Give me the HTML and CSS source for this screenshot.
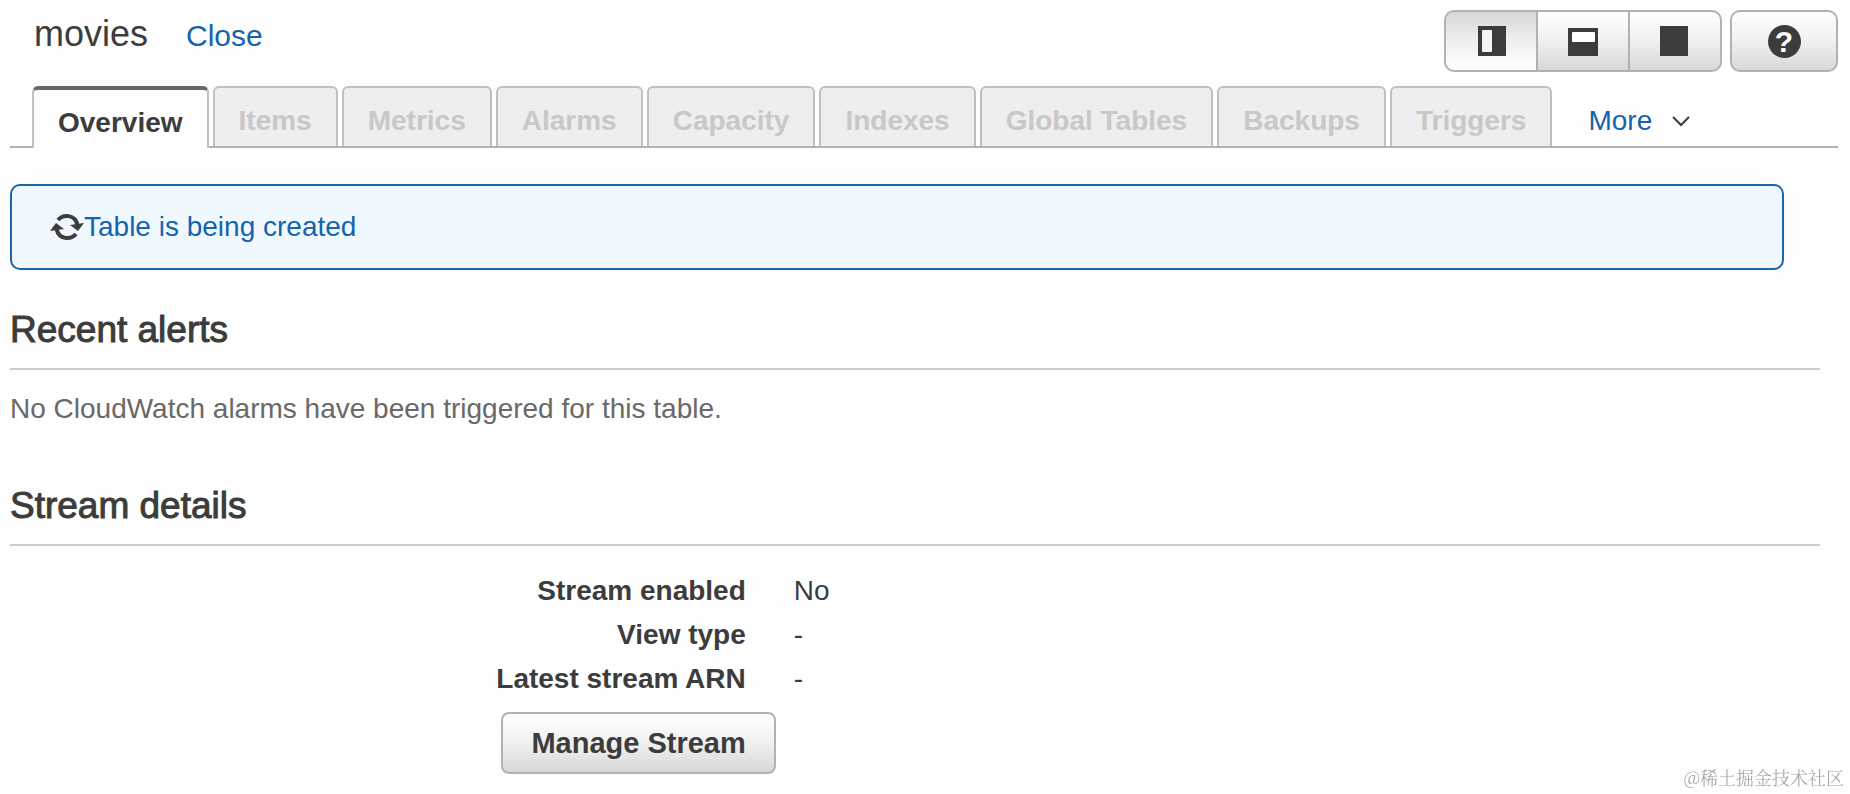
FILE: index.html
```html
<!DOCTYPE html>
<html lang="en">
<head>
    <meta charset="UTF-8">
    <meta name="viewport" content="width=device-width, initial-scale=1.0">
    <title>movies</title>
    <link rel="stylesheet" href="styles.css">
</head>
<body>
    <header class="header">
        <div class="title">
            <h1>movies</h1>
            <a href="#">Close</a>
        </div>
        <div class="tools">
            <div class="btn-group">
                <button class="btn active" type="button" aria-label="Side layout">
                    <svg width="30" height="30" viewBox="0 0 30 30">
                        <rect x="2" width="28" height="30" fill="#3c3c3c"/>
                        <rect x="6" y="4" width="10" height="22" rx="1" fill="#f4f4f4"/>
                    </svg>
                </button>
                <button class="btn" type="button" aria-label="Bottom layout">
                    <svg width="30" height="30" viewBox="0 0 30 30">
                        <rect y="2" width="30" height="28" fill="#3c3c3c"/>
                        <rect x="4" y="6" width="23" height="10" rx="1" fill="#fff"/>
                    </svg>
                </button>
                <button class="btn" type="button" aria-label="Full layout">
                    <svg width="30" height="30" viewBox="0 0 30 30">
                        <rect width="28" height="30" fill="#3c3c3c"/>
                    </svg>
                </button>
            </div>
            <button class="btn help" type="button" aria-label="Help"><span>?</span></button>
        </div>
    </header>

    <nav class="tabs">
        <button class="tab selected" type="button">Overview</button>
        <button class="tab" type="button" disabled>Items</button>
        <button class="tab" type="button" disabled>Metrics</button>
        <button class="tab" type="button" disabled>Alarms</button>
        <button class="tab" type="button" disabled>Capacity</button>
        <button class="tab" type="button" disabled>Indexes</button>
        <button class="tab" type="button" disabled>Global Tables</button>
        <button class="tab" type="button" disabled>Backups</button>
        <button class="tab" type="button" disabled>Triggers</button>
        <a class="more" href="#">More
            <svg width="18" height="12" viewBox="0 0 18 12">
                <path d="M1 2l8 8 8-8" fill="none" stroke="#3c3c3c" stroke-width="2"/>
            </svg>
        </a>
    </nav>

    <main class="content">
        <div class="notice">
            <svg width="34" height="28" viewBox="0 0 34 28">
                <g fill="none" stroke="#3c3c3c" stroke-width="4">
                    <path d="M8 7C13 1 25 1 27.500 12"/>
                    <path d="M26 21C21 27 9 27 6.500 16"/>
                </g>
                <path d="M20 12l14-2-6 8z" fill="#3c3c3c"/>
                <path d="M14 16L0 18l6-8z" fill="#3c3c3c"/>
            </svg>
            <span>Table is being created</span>
        </div>

        <section>
            <h2>Recent alerts</h2>
            <p>No CloudWatch alarms have been triggered for this table.</p>
        </section>

        <section class="stream">
            <h2>Stream details</h2>
            <dl class="details">
                <dt>Stream enabled</dt>
                <dd>No</dd>
                <dt>View type</dt>
                <dd>-</dd>
                <dt>Latest stream ARN</dt>
                <dd>-</dd>
            </dl>
            <div class="actions">
                <button class="btn manage" type="button">Manage Stream</button>
            </div>
        </section>
    </main>

    <div class="watermark">@稀土掘金技术社区</div>
</body>
</html>
```

FILE: styles.css
```css
*{
    box-sizing: border-box;
    margin: 0;
    padding: 0;
}
body{
    padding: 10px 12px 20px 10px;
    background-color: #fefefe;
    color: #3c3c3c;
    font-family: "Liberation Sans", Arial, sans-serif;
    font-size: 28px;
    line-height: 44px;
}
a{
    color: #1663ab;
    text-decoration: none;
}
button{
    font-family: inherit;
    color: inherit;
}

/* header */
.header{
    display: flex;
    justify-content: space-between;
}
.title{
    display: flex;
    align-items: baseline;
    gap: 38px;
    padding-left: 24px;
    height: 48px;
    line-height: 48px;
}
.title h1{
    font-size: 36px;
    font-weight: normal;
}
.title a{
    font-size: 30px;
}
.tools{
    display: flex;
    gap: 8px;
}
.btn{
    height: 62px;
    border: 2px solid #b2b2b2;
    border-radius: 8px;
    background: linear-gradient(#fff, #f0f0f0 50%, #d8d8d8);
}
.btn-group{
    display: flex;
}
.btn-group .btn{
    display: flex;
    align-items: center;
    justify-content: center;
    width: 94px;
    border-radius: 0;
}
.btn-group .btn + .btn{
    margin-left: -2px;
}
.btn-group .btn:first-child{
    border-radius: 10px 0 0 10px;
}
.btn-group .btn:last-child{
    border-radius: 0 10px 10px 0;
}
.btn-group .active{
    background: linear-gradient(#d8d8d8, #efefef 50%, #fff);
}
.help{
    width: 108px;
    border-radius: 10px;
}
.help span{
    display: block;
    width: 33px;
    height: 33px;
    margin: 0 auto;
    border-radius: 50%;
    background-color: #3c3c3c;
    color: #fff;
    font-size: 30px;
    font-weight: bold;
    line-height: 34px;
}

/* tabs */
.tabs{
    display: flex;
    align-items: flex-end;
    gap: 4px;
    margin-top: 14px;
    padding-left: 22px;
    border-bottom: 2px solid #b2b2b2;
}
.tab{
    padding: 11px 24px 3px;
    border: 2px solid #c0c0c0;
    border-bottom: none;
    border-radius: 6px 6px 0 0;
    background-color: #eee;
    color: #c8c8c8;
    font-size: 28px;
    font-weight: bold;
    line-height: 44px;
    white-space: nowrap;
}
.tab.selected{
    margin-bottom: -2px;
    border-top: 4px solid #6b6868;
    background-color: #fefefe;
    color: #3c3c3c;
}
.more{
    display: flex;
    align-items: center;
    gap: 20px;
    padding: 0 0 3px 32px;
}

/* content */
.notice{
    display: flex;
    align-items: center;
    margin: 36px 54px 40px 0;
    padding: 19px 38px;
    border: 2px solid #1a66a8;
    border-radius: 10px;
    background-color: #f0f8ff;
    color: #1663ab;
}
section{
    margin-right: 18px;
}
h2{
    padding-bottom: 18px;
    border-bottom: 2px solid #ccc;
    font-size: 37px;
    font-weight: normal;
    line-height: 40px;
    -webkit-text-stroke: 1px #3c3c3c;
}
p{
    margin-top: 17px;
    color: #6b6868;
}
.stream{
    margin-top: 55px;
}
.details{
    display: grid;
    grid-template-columns: 11fr 15fr;
    margin-top: 23px;
}
dt{
    padding-right: 30px;
    font-weight: bold;
    text-align: right;
}
dd{
    padding-left: 18px;
}
.actions{
    display: grid;
    grid-template-columns: 11fr 15fr;
    margin-top: 11px;
}
.manage{
    justify-self: end;
    padding: 0 28px;
    font-size: 29px;
    font-weight: bold;
}
.watermark{
    position: fixed;
    right: 6px;
    bottom: 4px;
    color: #a0a0a0;
    font-family: "Noto Serif CJK SC", "Noto Sans CJK SC", serif;
    font-size: 18px;
    font-weight: 300;
    line-height: 26px;
}
```
